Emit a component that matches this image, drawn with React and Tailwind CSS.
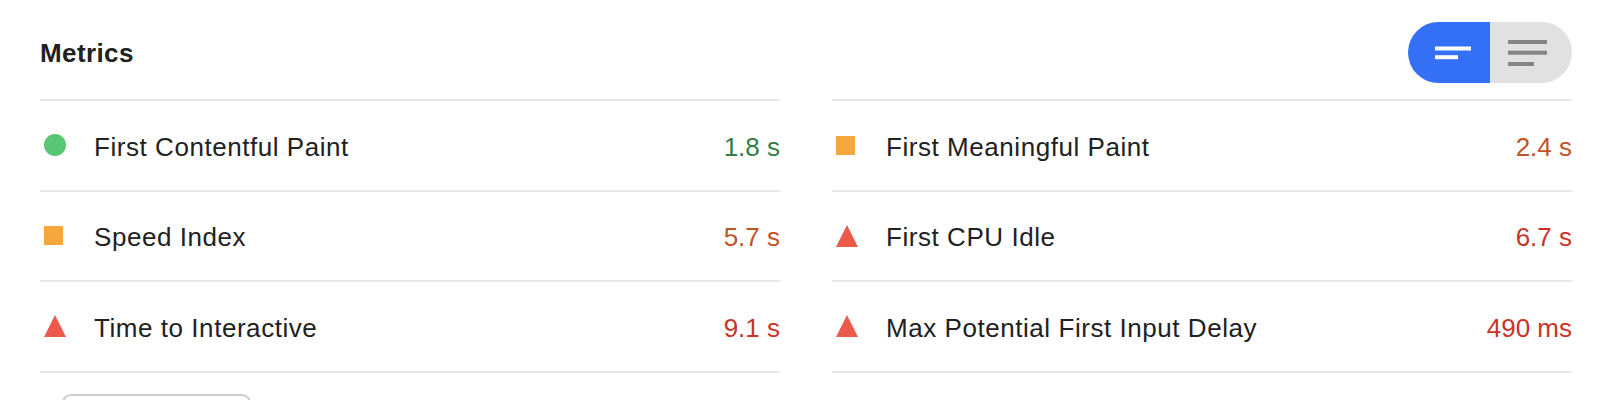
import React from "react";

const RED = "#eb5a4b";

function Icon({ kind }) {
  if (kind === "pass") {
    return (
      <div className="w-[22px] h-[22px] flex items-center justify-center">
        <div className="w-[22px] h-[22px] rounded-full bg-[#59c676]" />
      </div>
    );
  }
  if (kind === "average") {
    return (
      <div className="w-[22px] h-[22px] flex items-center justify-start">
        <div className="w-[19px] h-[19px] bg-[#f5a73b]" />
      </div>
    );
  }
  return (
    <svg width="22" height="22" viewBox="0 0 22 22" className="block">
      <polygon points="11,0 22,22 0,22" fill={RED} />
    </svg>
  );
}

const valueColor = {
  pass: "text-[#2f7f45]",
  average: "text-[#c1532a]",
  fail: "text-[#c9332a]",
};

function Row({ kind, label, value }) {
  return (
    <div className="flex items-center h-[90.5px] border-b-2 border-[#e8e8e8]">
      <div className="pl-[4px] w-[54px] flex items-center">
        <Icon kind={kind} />
      </div>
      <div className="flex-1 pt-[3px] text-[26px] tracking-[0.55px] text-[#212121] leading-none">
        {label}
      </div>
      <div className={`pt-[3px] text-[26px] leading-none ${valueColor[kind]}`}>{value}</div>
    </div>
  );
}

function Column({ rows }) {
  return (
    <div className="flex flex-col border-t-2 border-[#e8e8e8]">
      {rows.map((r) => (
        <Row key={r.label} {...r} />
      ))}
    </div>
  );
}

export default function App() {
  const left = [
    { kind: "pass", label: "First Contentful Paint", value: "1.8 s" },
    { kind: "average", label: "Speed Index", value: "5.7 s" },
    { kind: "fail", label: "Time to Interactive", value: "9.1 s" },
  ];
  const right = [
    { kind: "average", label: "First Meaningful Paint", value: "2.4 s" },
    { kind: "fail", label: "First CPU Idle", value: "6.7 s" },
    { kind: "fail", label: "Max Potential First Input Delay", value: "490 ms" },
  ];
  return (
    <div
      className="w-[1610px] h-[400px] overflow-hidden bg-white pl-[40px] pr-[38px]"
      style={{ fontFamily: '"Liberation Sans", Arial, sans-serif' }}
    >
      <div className="flex items-center justify-between pt-[22px] pb-[16px]">
        <div className="text-[26px] font-bold text-[#212121] leading-none tracking-[0.4px]">
          Metrics
        </div>
        <div className="flex h-[61px] rounded-full overflow-hidden">
          <div className="w-[82px] h-[61px] bg-[#3370f6]">
            <svg width="82" height="61" viewBox="0 0 82 61" className="block">
              <rect x="27" y="24.5" width="36" height="4" fill="#fff" />
              <rect x="27" y="33.2" width="23" height="4" fill="#fff" />
            </svg>
          </div>
          <div className="w-[82px] h-[61px] bg-[#e1e1e1]">
            <svg width="82" height="61" viewBox="0 0 82 61" className="block">
              <rect x="18" y="18" width="39" height="4" fill="#858585" />
              <rect x="18" y="28.7" width="39" height="4" fill="#858585" />
              <rect x="18" y="40" width="26" height="4" fill="#858585" />
            </svg>
          </div>
        </div>
      </div>
      <div className="grid grid-cols-2 gap-x-[52px]">
        <Column rows={left} />
        <Column rows={right} />
      </div>
      <div className="pl-[22px] pt-[21px]">
        <div className="w-[189px] h-[48px] rounded-[9px] border-2 border-[#cccccc]" />
      </div>
    </div>
  );
}
